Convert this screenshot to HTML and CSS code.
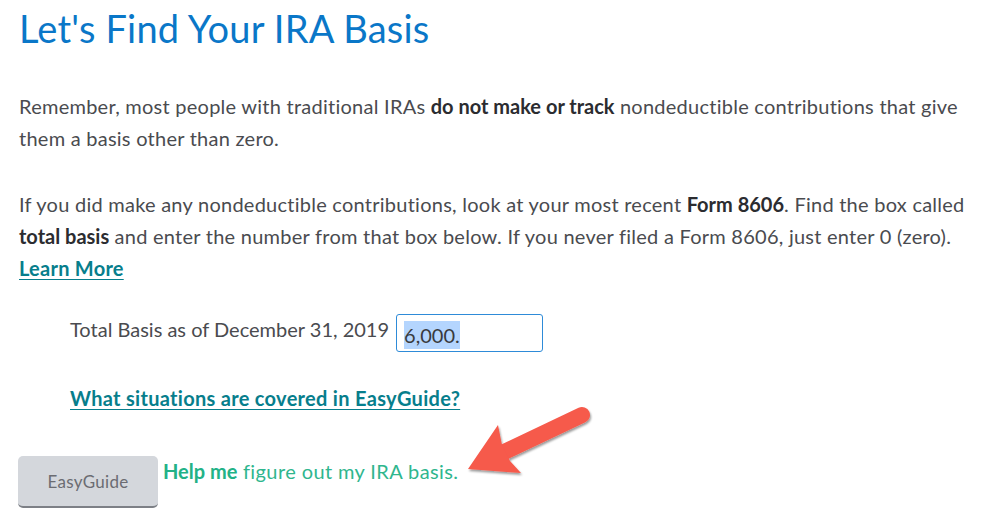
FILE: index.html
```html
<!DOCTYPE html>
<html lang="en">
<head>
  <meta charset="UTF-8">
  <meta name="viewport" content="width=device-width, initial-scale=1.0">
  <title>Let's Find Your IRA Basis</title>
  <link rel="stylesheet" href="styles.css">
</head>
<body>
  <div class="page">
    <h1>Let's Find Your IRA Basis</h1>

    <p>Remember, most people with traditional IRAs <b>do not make or track</b> nondeductible contributions that give them a basis other than zero.</p>

    <p>If you did make any nondeductible contributions, look at your most recent <b>Form 8606</b>. Find the box called <b>total basis</b> and enter the number from that box below. If you never filed a Form 8606, just enter 0 (zero).<br>
      <a href="#" class="link">Learn More</a></p>

    <div class="field">
      <label for="basis">Total Basis as of December 31, 2019</label>
      <div class="input-box" id="basis"><span class="selected">6,000.</span></div>
    </div>

    <div class="covered">
      <a href="#" class="link">What situations are covered in EasyGuide?</a>
    </div>

    <div class="helper">
      <button type="button" class="guide-btn">EasyGuide</button>
      <span class="help-text"><b>Help me</b> figure out my IRA basis.</span>
      <svg class="arrow" width="160" height="100" viewBox="0 0 160 100">
        <defs>
          <filter id="shadow" x="-20%" y="-20%" width="140%" height="140%">
            <feDropShadow dx="1" dy="2" stdDeviation="1" flood-color="#000" flood-opacity="0.4"/>
          </filter>
        </defs>
        <g filter="url(#shadow)" fill="#f65a4c">
          <path d="M142 16 L62 54" stroke="#f65a4c" stroke-width="16" stroke-linecap="round" fill="none"/>
          <path d="M28 70 L58 26 L62 46 L70 62 L81 74 Z"/>
        </g>
      </svg>
    </div>
  </div>
</body>
</html>
```

FILE: styles.css
```css
body {
  margin: 0;
  font-family: Lato, "Open Sans", sans-serif;
  color: #4a4b4f;
  background: #fff;
}
.page {
  padding: 6px 20px 0 19px;
  width: 960px;
}
h1 {
  margin: 0;
  font-size: 38px;
  font-weight: 400;
  color: #0a77c8;
  line-height: 44px;
  letter-spacing: 0.2px;
}
p {
  margin: 40px 0 0;
  font-size: 20px;
  line-height: 32px;
  letter-spacing: 0.25px;
}
p + p {
  margin-top: 34px;
}
b {
  color: #2b2c30;
  font-weight: 700;
  letter-spacing: 0;
}
.link {
  color: #077e8c;
  font-weight: 700;
  text-decoration: underline;
  text-decoration-thickness: 1px;
  text-underline-offset: 3px;
}
.field {
  display: flex;
  align-items: flex-start;
  gap: 7px;
  margin: 30px 0 0 51px;
}
.field label {
  font-size: 20px;
  line-height: 30px;
}
.input-box {
  width: 147px;
  height: 38px;
  border: 1px solid #2e8bd8;
  border-radius: 3px;
  padding: 9px 0 0 7px;
  box-sizing: border-box;
  font-size: 20px;
  line-height: 22px;
  color: #393a3d;
}
.selected {
  background: #b4d5fe;
  padding: 2px 0;
}
.covered {
  margin: 34px 0 0 51px;
  font-size: 20px;
  letter-spacing: 0.3px;
}
.helper {
  position: relative;
  display: flex;
  align-items: flex-start;
  gap: 5px;
  margin-top: 46px;
}
.guide-btn {
  -webkit-appearance: none;
  appearance: none;
  width: 140px;
  height: 52px;
  margin-left: -1px;
  background-color: #d4d7dc;
  border: 0;
  border-bottom: 2px solid #7d8086;
  border-radius: 5px;
  font-family: inherit;
  font-size: 17px;
  font-weight: 400;
  color: #6b6c72;
  letter-spacing: 0.3px;
}
.help-text {
  font-size: 20px;
  color: #2fb68e;
  padding-top: 3px;
  letter-spacing: 0.4px;
}
.help-text b {
  color: #23b287;
}
.arrow {
  position: absolute;
  left: 421px;
  top: -57px;
}
```
